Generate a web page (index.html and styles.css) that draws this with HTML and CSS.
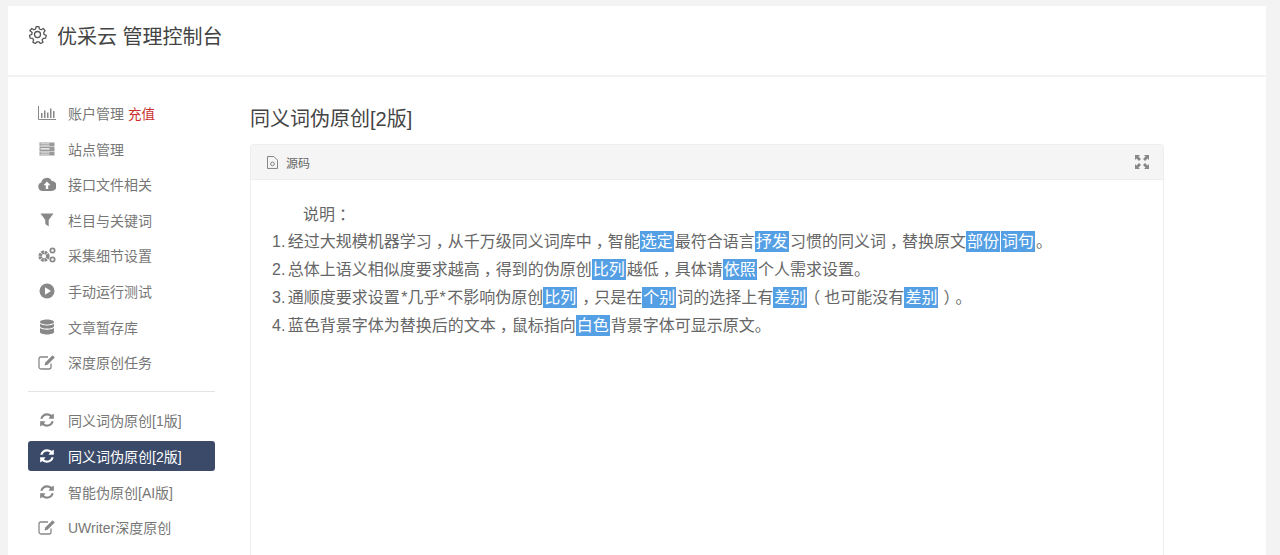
FILE: index.html
```html
<!DOCTYPE html>
<html lang="zh-CN">
<head>
    <meta charset="UTF-8">
    <title>优采云 管理控制台</title>
    <link rel="stylesheet" href="styles.css">
</head>
<body>
    <svg class="sprite" xmlns="http://www.w3.org/2000/svg">
        <symbol id="i-refresh" viewBox="0 0 1792 1792"><path fill="currentColor" d="M1639 1056q0 5-1 7-64 268-268 434.5t-478 166.5q-146 0-282.5-55t-243.5-157l-129 129q-19 19-45 19t-45-19-19-45v-448q0-26 19-45t45-19h448q26 0 45 19t19 45-19 45l-137 137q71 66 161 102t187 36q134 0 250-65t186-179q11-17 53-117 8-23 30-23h192q13 0 22.5 9.5t9.5 22.5zm25-800v448q0 26-19 45t-45 19h-448q-26 0-45-19t-19-45 19-45l138-138q-148-137-349-137-134 0-250 65t-186 179q-11 17-53 117-8 23-30 23h-199q-13 0-22.5-9.5t-9.5-22.5v-7q65-268 270-434.5t480-166.5q146 0 284 55.5t245 156.5l130-129q19-19 45-19t45 19 19 45z"/></symbol>
        <symbol id="i-edit" viewBox="0 0 18 16"><path fill="none" stroke="currentColor" stroke-width="1.3" d="M13 9.5V13a2 2 0 0 1-2 2H3a2 2 0 0 1-2-2V5a2 2 0 0 1 2-2h7"/><path fill="currentColor" d="M14.6 1.2l2.2 2.2-7.3 7.3-3 .8.8-3z"/></symbol>
    </svg>

    <div class="panel">
        <header class="panel-head">
            <svg class="gear" viewBox="0 0 24 24"><path fill="none" stroke="currentColor" stroke-width="1.6" stroke-linejoin="round" d="M10.2 2h3.6l.6 3 2.2 1 2.6-1.6 2.4 2.8-1.8 2.4.5 2.4 2.7 1.2-.7 3.5-3 .2-1.4 2 1 2.9-3.2 1.7-2-2.3h-2.4l-2 2.3-3.2-1.7 1-2.9-1.4-2-3-.2-.7-3.5 2.7-1.200.5-2.400L2.400 7.200l2.400-2.800L7.400 6l2.200-1z"/><circle cx="12" cy="12" r="3.800" fill="none" stroke="currentColor" stroke-width="1.600"/></svg>
            <h1>优采云 管理控制台</h1>
        </header>

        <div class="panel-main">
            <ul class="side-menu">
                <li><svg class="icon" viewBox="0 0 18 16"><path fill="none" stroke="currentColor" d="M.5 1v13.500H18"/><path fill="currentColor" d="M3 8h1.500v5H3zM6 5.500h1.500V13H6zM9 7.500h1.500V13H9zM12 3.500h1.500V13H12zM15 6h1.500v7H15z"/></svg>账户管理 <em class="recharge">充值</em></li>
                <li><svg class="icon icon-soft" viewBox="0 0 18 16"><path fill="currentColor" d="M1.500 1.500h15v4h-15zM1.500 6h15v4h-15zM1.500 10.500h15v4h-15z"/><path fill="#fff" d="M2.500 2.500h9v.8h-9zM2.500 4h9v.5h-9zM2.500 7h9v.8h-9zM2.500 8.500h9v.5h-9zM2.500 11.500h9v.8h-9zM2.500 13h9v.5h-9z"/></svg>站点管理</li>
                <li><svg class="icon" viewBox="0 0 18 14"><path fill="currentColor" d="M4.500 14a4.300 4.300 0 0 1-1.200-8.400A5.500 5.500 0 0 1 13.700 4a5 5 0 0 1 0 10z"/><path fill="#fff" d="M9 4.500l3.500 3.700h-2.300V12H7.800V8.200H5.500z"/></svg>接口文件相关</li>
                <li><svg class="icon" viewBox="0 0 16 16"><path fill="currentColor" d="M1.500 1.500h13L9.700 8v6.500L6.300 12V8z"/></svg>栏目与关键词</li>
                <li><svg class="icon" viewBox="0 0 18 16"><circle cx="6" cy="9.200" r="3.800" fill="none" stroke="currentColor" stroke-width="3.600" stroke-dasharray="2.400 .6"/><circle cx="14.500" cy="3.500" r="2.200" fill="none" stroke="currentColor" stroke-width="1.700"/><circle cx="14.500" cy="12.500" r="2.200" fill="none" stroke="currentColor" stroke-width="1.700"/></svg>采集细节设置</li>
                <li><svg class="icon" viewBox="0 0 16 16"><circle cx="8" cy="8" r="7.500" fill="currentColor"/><path fill="#fff" d="M6 4.300l6 3.700-6 3.700z"/></svg>手动运行测试</li>
                <li><svg class="icon" viewBox="0 0 16 16"><path fill="currentColor" d="M8 .5c3.900 0 7 1.100 7 2.500S11.900 5.500 8 5.500 1 4.400 1 3 4.100.5 8 .5zM1 4.800c1.500 1.200 4 1.700 7 1.700s5.500-.5 7-1.700v2.400c0 1.400-3.100 2.300-7 2.300S1 8.600 1 7.200zM1 9c1.500 1.200 4 1.700 7 1.700S13.500 10.200 15 9v1.500c0 0 0 .3 0 .7V13c0 1.400-3.100 2.500-7 2.500S1 14.400 1 13z"/></svg>文章暂存库</li>
                <li><svg class="icon"><use href="#i-edit"/></svg>深度原创任务</li>
                <li class="side-divider"></li>
                <li><svg class="icon"><use href="#i-refresh"/></svg>同义词伪原创[1版]</li>
                <li class="active"><svg class="icon"><use href="#i-refresh"/></svg>同义词伪原创[2版]</li>
                <li><svg class="icon"><use href="#i-refresh"/></svg>智能伪原创[AI版]</li>
                <li><svg class="icon"><use href="#i-edit"/></svg>UWriter深度原创</li>
            </ul>

            <section class="content">
                <h2>同义词伪原创[2版]</h2>
                <div class="card">
                    <div class="card-head">
                        <span class="card-title">
                            <svg class="file-icon" viewBox="0 0 12 14"><path fill="none" stroke="currentColor" d="M.5.500h7l4 4v9H.500z"/><circle cx="6" cy="8.500" r="2" fill="none" stroke="currentColor"/></svg>源码
                        </span>
                        <svg class="expand" viewBox="0 0 14 14"><path fill="currentColor" d="M0 0h5L3.500 1.500 6 4 4 6 1.500 3.500 0 5zM14 0v5l-1.500-1.500L10 6 8 4l2.500-2.500L9 0zM0 14V9l1.500 1.500L4 8l2 2-2.500 2.500L5 14zM14 14H9l1.500-1.500L8 10l2-2 2.500 2.500L14 9z"/></svg>
                    </div>
                    <div class="card-body">
                        <p class="intro">说明<span class="pn">：</span></p>
                        <p>1. 经过大规模机器学习<span class="pn">，</span>从千万级同义词库中<span class="pn">，</span>智能<span class="syn">选定</span>最符合语言<span class="syn">抒发</span>习惯的同义词<span class="pn">，</span>替换原文<span class="syn">部份</span><span class="syn">词句</span>。</p>
                        <p>2. 总体上语义相似度要求越高<span class="pn">，</span>得到的伪原创<span class="syn">比列</span>越低<span class="pn">，</span>具体请<span class="syn">依照</span>个人需求设置。</p>
                        <p>3. 通顺度要求设置<span class="mark">*几乎*</span>不影响伪原创<span class="syn">比列</span><span class="pn">，</span>只是在<span class="syn">个别</span>词的选择上有<span class="syn">差别</span><span class="pn">（</span>也可能没有<span class="syn">差别</span><span class="pn">）</span>。</p>
                        <p>4. 蓝色背景字体为替换后的文本<span class="pn">，</span>鼠标指向<span class="syn">白色</span>背景字体可显示原文。</p>
                    </div>
                </div>
            </section>
        </div>
    </div>
</body>
</html>
```

FILE: styles.css
```css
html, body {
    height: 100%;
    overflow: hidden;
}

body {
    margin: 0;
    padding: 6px 14px 0 8px;
    box-sizing: border-box;
    background-color: #f3f3f3;
    font-family: "Liberation Sans", "Noto Sans CJK SC", sans-serif;
    color: #666;
}

.sprite {
    display: none;
}

.panel {
    background-color: #fff;
    height: 100%;
}

/* Шапка */
.panel-head {
    display: flex;
    align-items: center;
    height: 71px;
    padding: 0 0 11px 20px;
    box-sizing: border-box;
    border-bottom: 2px solid #f2f2f2;
    color: #555;
}

.panel-head h1 {
    margin: 0;
    font-size: 20px;
    font-weight: normal;
    color: #444;
}

.gear {
    width: 19px;
    height: 19px;
    margin-right: 10px;
    margin-top: -2px;
}

.panel-main {
    display: flex;
}

/* Меню слева */
.side-menu {
    display: flex;
    flex-direction: column;
    gap: 5.6px;
    width: 187px;
    margin: 21px 0 0 20px;
    padding: 0;
    list-style: none;
    font-size: 14px;
    color: #777;
}

.side-menu li {
    display: flex;
    align-items: center;
    height: 30px;
    padding-left: 10px;
    border-radius: 3px;
    white-space: pre;
}

.side-menu li.side-divider {
    height: 1px;
    margin: 8px 0 8px;
    padding: 0;
    background-color: #e4e4e4;
    border-radius: 0;
}

.side-menu li.active {
    background-color: #3a4a68;
    color: #fff;
}

.icon {
    flex: none;
    width: 18px;
    height: 16px;
    margin-right: 12px;
    color: #888;
}

.icon-soft {
    color: #999;
}

.active .icon {
    color: #fff;
}

.recharge {
    font-style: normal;
    font-size: 13.5px;
    color: #c9302c;
}

/* Контент */
.content {
    flex: 1;
    margin: 28px 102px 0 35px;
}

.content h2 {
    margin: 0 0 11px;
    font-size: 20px;
    line-height: 28px;
    font-weight: normal;
    color: #444;
}

.card {
    height: 420px;
    border: 1px solid #eee;
    border-radius: 3px;
}

.card-head {
    display: flex;
    align-items: center;
    justify-content: space-between;
    height: 34px;
    padding: 0 14px 0 16px;
    background-color: #f5f5f5;
    border-bottom: 1px solid #eee;
}

.card-title {
    display: flex;
    align-items: center;
    font-size: 12px;
    color: #666;
}

.file-icon {
    width: 11px;
    height: 13px;
    margin-right: 8px;
    color: #777;
}

.expand {
    width: 14px;
    height: 14px;
    color: #888;
}

.card-body {
    padding: 20.6px 21px;
    font-size: 16px;
    line-height: 27.8px;
    color: #666;
    word-spacing: -2px;
}

.card-body p {
    margin: 0;
    white-space: nowrap;
}

.card-body .intro {
    padding-left: 31px;
}

/* Заменённые слова */
.syn {
    margin-right: 1px;
    padding: 2px 1px;
    background-color: #559fe4;
    color: #fff;
}

/* Звёздочки в оригинале шире */
.mark {
    padding: 0 1.5px;
}

/* Знаки препинания по центру клетки */
.pn {
    display: inline-block;
    width: 1em;
    text-align: center;
    font-feature-settings: "halt";
}
```
